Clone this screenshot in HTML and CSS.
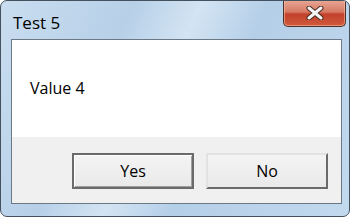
FILE: index.html
```html
<!DOCTYPE html>
<html lang="en">
<head>
    <meta charset="UTF-8" />
    <title>Test 5</title>
    <link rel="stylesheet" href="styles.css">
</head>
<body>
    <div class="window">
        <div class="titlebar">
            <span class="title">Test 5</span>
            <div class="close-btn">
                <svg width="22" height="14" viewBox="0 0 22 14">
                    <path d="M5 2 L17 12 M17 2 L5 12" stroke="#4a2a22" stroke-width="5" stroke-linecap="round" />
                    <path d="M5 2 L17 12 M17 2 L5 12" stroke="#f4f4f4" stroke-width="3" stroke-linecap="round" />
                </svg>
            </div>
        </div>
        <div class="client">
            <div class="message">Value 4</div>
            <div class="buttons">
                <button class="btn default">Yes</button>
                <button class="btn">No</button>
            </div>
        </div>
    </div>
</body>
</html>
```

FILE: styles.css
```css
* {
    margin: 0;
    padding: 0;
    box-sizing: border-box;
}

body {
    font-family: "Open Sans", "Noto Sans", sans-serif;
    background-color: #ffffff;
    width: 353px;
    height: 217px;
    overflow: hidden;
}

.window {
    width: 350px;
    height: 217px;
    border: 1px solid #44525f;
    border-radius: 7px;
    background: linear-gradient(115deg, #c9ddef 0%, #b7d0e8 30%, #d3e4f3 45%, #b5cfe8 60%, #c2d9ee 100%);
    display: flex;
    flex-direction: column;
    overflow: hidden;
}

.titlebar {
    height: 38px;
    display: flex;
    align-items: flex-start;
}

.title {
    padding: 10px 0 0 12px;
    font-size: 17px;
    color: #000000;
}

.close-btn {
    margin-left: auto;
    margin-right: 3px;
    margin-top: -1px;
    width: 63px;
    height: 27px;
    border: 1px solid #4e3229;
    border-top: none;
    border-radius: 0 0 5px 5px;
    background: linear-gradient(#e8a896 0%, #d77b66 45%, #c3412a 55%, #cf5a3e 100%);
    box-shadow: inset 0 0 0 1px rgba(255, 200, 180, 0.5);
    display: flex;
    align-items: center;
    justify-content: center;
}

.client {
    flex: 1;
    margin: 0 7px 12px 10px;
    border: 1px solid #6b7886;
    background-color: #f0f0f0;
    display: flex;
    flex-direction: column;
}

.message {
    height: 97px;
    background-color: #ffffff;
    padding: 37px 0 0 18px;
    font-size: 16px;
    color: #000000;
}

.buttons {
    flex: 1;
    display: flex;
    justify-content: flex-end;
    gap: 12px;
    padding: 16px 13px 0 0;
}

.btn {
    width: 122px;
    height: 36px;
    font-family: inherit;
    font-size: 16px;
    color: #000000;
    background: linear-gradient(#f4f4f4, #e9e9e9);
    border: 2px solid;
    border-color: #e2e2e2 #6a6a6a #6a6a6a #e2e2e2;
}

.btn.default {
    border-color: #6a6a6a;
    box-shadow: inset 1px 1px 0 #ffffff, inset -1px -1px 0 #a0a0a0;
}
```
